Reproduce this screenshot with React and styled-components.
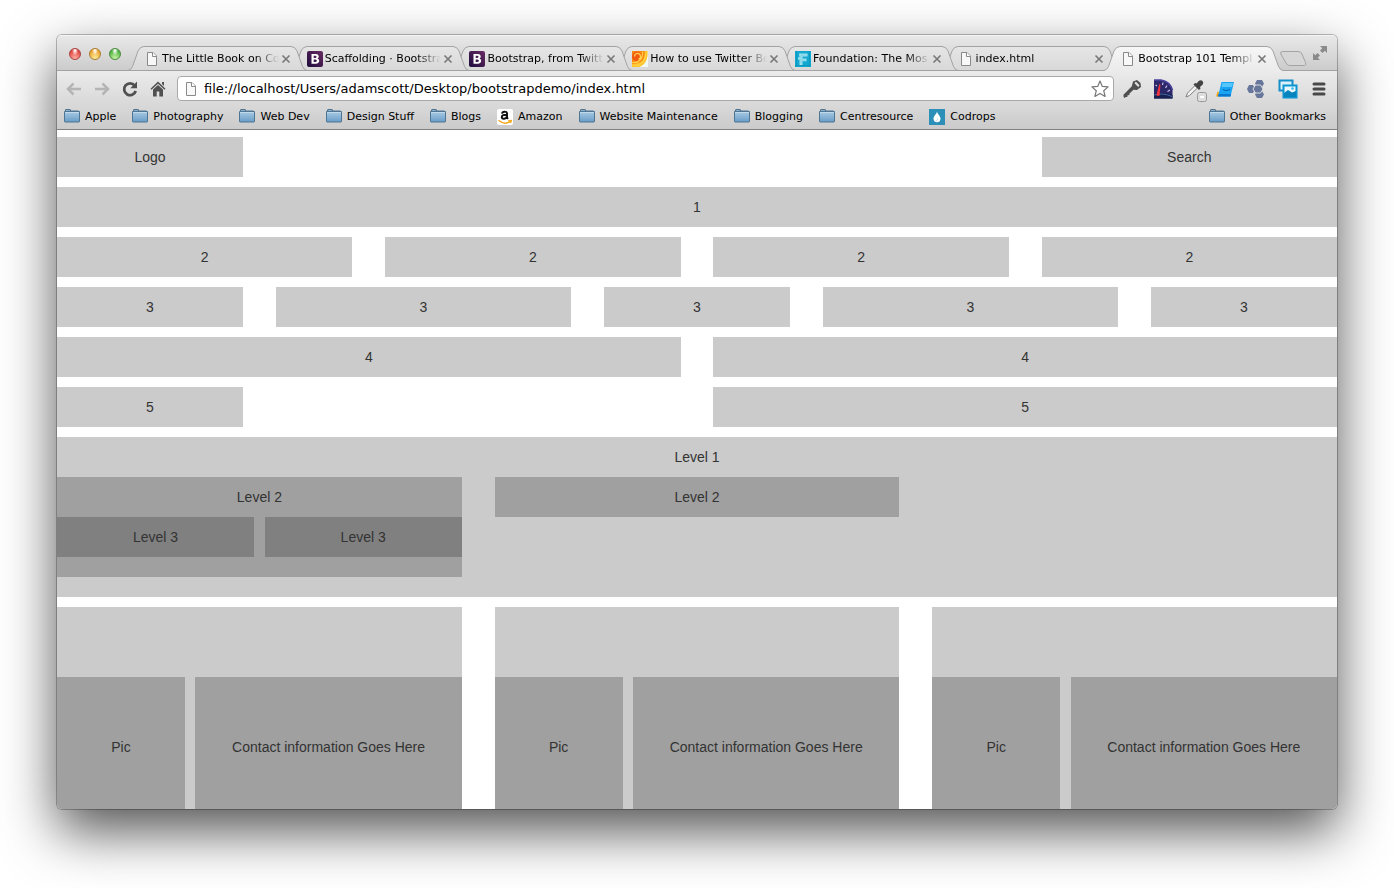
import React from "react";
import styled, { createGlobalStyle } from "styled-components";

const GlobalStyle = createGlobalStyle`
  *, *::before, *::after { box-sizing: border-box; }
  body { margin: 0; background: #fff; }
  button, input { font: inherit; color: inherit; }
  button { border: 0; padding: 0; background: none; display: flex; }
`;

const Desktop = styled.div`
  height: 100vh;
  padding: 35px 57px 79px;
  display: flex;
`;

const BrowserWindow = styled.div`
  flex: 1;
  min-width: 0;
  display: flex;
  flex-direction: column;
  border-radius: 5px;
  overflow: hidden;
  background: #fff;
  font-family: "DejaVu Sans", sans-serif;
  font-size: 11px;
  color: #000;
  box-shadow: 0 0 0 1px rgba(0, 0, 0, 0.25), 0 22px 54px rgba(0, 0, 0, 0.68);
`;

const TabStrip = styled.div`
  display: flex;
  height: 36px;
  padding: 11px 9px 0 12px;
  background: linear-gradient(#e9e9e9, #cbcbcb);
  box-shadow: inset 0 1px #f4f4f4, inset 0 -1px #a3a3a3;
`;

const TrafficLights = styled.div`
  display: flex;
  gap: 8px;
  padding-top: 2px;
  margin-right: 7px;
`;

const Light = styled.button`
  width: 12px;
  height: 12px;
  border-radius: 50%;
  border: 1px solid ${(p) => p.$edge};
  background: radial-gradient(ellipse at 50% 15%, rgba(255, 255, 255, 0.9) 8%, transparent 42%),
    radial-gradient(circle at 50% 95%, ${(p) => p.$glow}, ${(p) => p.$tint} 75%);
`;

const TabList = styled.nav`
  flex: 1;
  min-width: 0;
  display: flex;
  isolation: isolate;
`;

const TabBox = styled.div`
  flex: 1 1 0;
  min-width: 0;
  display: flex;
  height: 25px;
  margin-right: -16px;
  position: relative;
  z-index: ${(p) => p.$order};
`;

const TabBody = styled.div`
  flex: 1;
  min-width: 0;
  display: flex;
  align-items: center;
  padding-top: 1px;
  border-top: 1px solid #a3a3a3;
  border-bottom: 1px solid ${(p) => (p.$active ? "#ebebeb" : "#a3a3a3")};
  background: ${(p) => (p.$active ? "linear-gradient(#f6f6f6, #ebebeb)" : "linear-gradient(#e6e6e6, #d8d8d8)")};
`;

const TabEdgeSvg = styled.svg`
  flex: none;
  width: 16px;
  height: 25px;
  display: block;
`;

const TabTitle = styled.a`
  flex: 1;
  min-width: 0;
  margin-left: 2px;
  overflow: hidden;
  white-space: nowrap;
  line-height: 16px;
  color: #000;
  text-decoration: none;
  mask-image: linear-gradient(to right, #000 calc(100% - 24px), transparent);
`;

const CloseButton = styled.button`
  flex: none;
  margin-left: 2px;
`;

const NewTabButton = styled.button`
  margin: 4px 5px 0 12px;
  align-self: flex-start;
`;

const FullscreenButton = styled.button`
  align-self: flex-start;
`;

const Chrome = styled.div`
  display: flex;
  flex-direction: column;
  padding-bottom: 1px;
  background: linear-gradient(#ebebeb, #cbcbcb);
  border-bottom: 1px solid #808080;
`;

const Toolbar = styled.div`
  display: flex;
  align-items: center;
  height: 35px;
  padding: 0 9px 0 7px;
`;

const NavButtons = styled.div`
  display: flex;
  gap: 8px;
  margin-right: 9px;
`;

const AddressBar = styled.label`
  flex: 1;
  min-width: 0;
  display: flex;
  align-items: center;
  height: 25px;
  padding: 0 4px 0 5px;
  border: 1px solid #a9a9a9;
  border-radius: 4px;
  background: #fff;
`;

const AddressInput = styled.input`
  flex: 1;
  min-width: 0;
  margin: 0 0 0 5px;
  padding: 0;
  border: 0;
  outline: 0;
  background: none;
  font-size: 13px;
  line-height: 20px;
`;

const Extensions = styled.div`
  display: flex;
  gap: 11px;
  margin-left: 8px;
`;

const BookmarksBar = styled.nav`
  display: flex;
  gap: 16px;
  height: 22px;
  padding: 0 11px 0 7px;
`;

const Bookmark = styled.a`
  display: flex;
  align-items: center;
  gap: 5px;
  white-space: nowrap;
  line-height: 16px;
  color: #000;
  text-decoration: none;
  &:last-child { margin-left: auto; }
`;

const Glyph = styled.svg`
  flex: none;
  display: block;
  overflow: visible;
`;

const Viewport = styled.main`
  flex: 1;
  min-height: 0;
  overflow: auto;
  scrollbar-width: none;
  padding-top: 7px;
  font-family: "Liberation Sans", Arial, sans-serif;
  font-size: 14px;
  line-height: 40px;
  text-align: center;
  color: #333;
`;

const Row = styled.div`
  display: grid;
  grid-template-columns: repeat(12, minmax(0, 1fr));
  column-gap: 2.5641%;
  align-items: start;
  margin-bottom: ${(p) => p.$after ?? 0}px;
`;

const shades = ["#cbcbcb", "#a0a0a0", "#808080"];

const Cell = styled.div`
  grid-column: ${(p) => p.$start ?? "auto"} / span ${(p) => p.$span};
  min-height: 40px;
  background: ${(p) => shades[p.$level ?? 0]};
`;

const ContactCard = styled(Cell)`
  padding-top: 70px;
`;

const ContactCell = styled(Cell)`
  line-height: 140px;
`;

const PageIcon = () => (
  <Glyph width="16" height="16" viewBox="0 0 16 16">
    <path d="M3.5 1.5h5.500l3.500 3.500v9.500h-9z" fill="#f8f8f8" stroke="#8a8a8a" />
    <path d="M8.500 1.500v4h4" fill="#fff" stroke="#8a8a8a" />
  </Glyph>
);

const BootstrapIcon = () => (
  <Glyph width="16" height="16" viewBox="0 0 16 16">
    <defs>
      <linearGradient id="bs" x1="0" x2="1" y1="1" y2="0">
        <stop offset="0" stopColor="#1d0b3c" />
        <stop offset="1" stopColor="#6a2c63" />
      </linearGradient>
    </defs>
    <rect width="16" height="16" rx="2" fill="url(#bs)" />
    <path
      fillRule="evenodd"
      fill="#fff"
      d="M4.500 3h4.300c3.400 0 3.700 3.600 1.700 4.600 2.700 1 2.200 5.100-1.600 5.100H4.500zM6.700 4.800v2.100h1.700c1.600 0 1.500-2.100 0-2.100zM6.700 8.600v2.400h1.900c1.700 0 1.700-2.400 0-2.400z"
    />
  </Glyph>
);

const SwirlIcon = () => (
  <Glyph width="16" height="16" viewBox="0 0 16 16">
    <path d="M0 0h16v16H0z" fill="#eef8f8" />
    <path d="M0 0h15.500c1 7-2 14-8.500 16H0z" fill="#ffc62e" />
    <path d="M0 0h12.500c2 8-3 13-12.500 13z" fill="#f98a10" />
    <circle cx="5" cy="5.500" r="5" fill="#f25a14" />
    <path
      d="M2.500 5.500a3 3 0 1 1 4 2.800M0 11.500c7 1 11-4 10.500-11M2 14.500c7 0 11.500-5 11.500-12"
      fill="none"
      stroke="#ffd24a"
      strokeWidth="1.200"
    />
  </Glyph>
);

const FoundationIcon = () => (
  <Glyph width="16" height="16" viewBox="0 0 16 16">
    <path fill="#12a8cf" d="M0 0h16v16H0z" />
    <path stroke="#0a8fb8" d="M1.500 0v16M14.500 0v16M0 14.500h16" opacity=".6" />
    <path d="M4 2.500h8.500v3H7.500v2h4v2.800h-4v3.700H4.500V8.500H3v-2h1.500z" fill="#a5e3f1" />
    <path d="M6 4h5.500M6 4v8.500M7 9h3.500" stroke="#74d0e5" fill="none" />
  </Glyph>
);

const FolderIcon = () => (
  <Glyph width="16" height="16" viewBox="0 0 16 16">
    <defs>
      <linearGradient id="fold" x1="0" x2="0" y1="0" y2="1">
        <stop offset="0" stopColor="#a9cbe4" />
        <stop offset="1" stopColor="#689cc6" />
      </linearGradient>
    </defs>
    <path d="M1.500 3V1q0-.5.5-.5h4q.5 0 .5.500v1h8v1z" fill="#86aecb" stroke="#52738e" />
    <path d="M.5 2.500h15v10q0 .5-.5.500H1q-.500 0-.500-.500z" fill="url(#fold)" stroke="#4f7594" />
    <path d="M1 3.500h14" stroke="#c0d9eb" />
  </Glyph>
);

const AmazonIcon = () => (
  <Glyph width="16" height="16" viewBox="0 0 16 16">
    <rect width="16" height="16" rx="2" fill="#fff" />
    <path
      d="M5 4.600C5.300 2.300 10 1.700 10 4.500v4l1 1.300M10 5.700C7 5.500 4.600 6.300 4.800 8.300c.3 2.200 4.300 2 5.200-.8"
      fill="none"
      stroke="#111"
      strokeWidth="2"
    />
    <path d="M1.500 11.300c4 3.400 8.500 3.500 12 .9M11.300 11.600l3-.2-.8 2.600" fill="none" stroke="#f5a81c" strokeWidth="1.400" />
  </Glyph>
);

const DropIcon = () => (
  <Glyph width="16" height="16" viewBox="0 0 16 16">
    <path fill="#2c8fb8" d="M0 0h16v16H0z" />
    <path d="M8 2.500c.5 3 3.500 4.300 3.500 7a3.500 3.700 0 0 1-7 0c0-2.700 3-4 3.500-7z" fill="#fff" />
    <path d="M8.500 9.500a2 2 0 0 1-2 2.500" fill="none" stroke="#b9dbe8" />
  </Glyph>
);

const ArrowIcon = ({ flip }) => (
  <Glyph width="20" height="20" viewBox="0 0 20 20">
    <path
      d={flip ? "M3 10h12M10.500 4.500l5.500 5.500-5.500 5.500" : "M17 10H5M9.500 4.500L4 10l5.500 5.500"}
      fill="none"
      stroke="#b5b5b5"
      strokeWidth="2.500"
    />
  </Glyph>
);

const ReloadIcon = () => (
  <Glyph width="20" height="20" viewBox="0 0 20 20">
    <path d="M14.700 6.600A5.900 5.900 0 1 0 15.700 12" fill="none" stroke="#505050" strokeWidth="2.800" />
    <path d="M17 2.500v6.700h-6.700z" fill="#505050" />
  </Glyph>
);

const HomeIcon = () => (
  <Glyph width="20" height="20" viewBox="0 0 20 20">
    <path d="M10 2.500l7.500 7.300-1 1L10 4.700l-6.500 6.100-1-1z" fill="#505050" />
    <path d="M14 3h2v4l-2-2zM5 10.500l5-4.600 5 4.600v7h-3.700v-5H8.700v5H5z" fill="#505050" />
  </Glyph>
);

const StarIcon = () => (
  <Glyph width="18" height="18" viewBox="0 0 18 18">
    <path
      d="M9 1l2.300 5.400 5.800.5-4.400 3.800 1.400 5.700L9 13.400l-5.100 3 1.400-5.700L.9 6.900l5.800-.5z"
      fill="#fff"
      stroke="#777"
      strokeWidth="1.200"
      strokeLinejoin="round"
    />
  </Glyph>
);

const KeyIcon = () => (
  <Glyph width="20" height="20" viewBox="0 0 20 20">
    <path
      d="M11 2.500l4-1.500 3.500 3 .5 4-4 3-3.500-.3-4.200 4 .3 1.200-2 .3-.3 1.800H3.800L2.500 19l-1-1.200v-2l8.300-8.600z"
      fill="#505050"
    />
    <path d="M13.800 4l2.400 2.600" stroke="#dedede" strokeWidth="2.200" strokeLinecap="round" />
  </Glyph>
);

const GaugeIcon = () => (
  <Glyph width="20" height="20" viewBox="0 0 20 20">
    <path d="M1 1h7q9 1.500 11.500 10v8.500H1z" fill="#2c2768" />
    <path d="M1 1h7q9 1.500 11.500 10" fill="none" stroke="#4a43a0" strokeWidth="1.500" />
    <path d="M1 19.500V15q9-2.500 18.500 1v3.500z" fill="#17204f" />
    <path d="M1 16q9-2.500 18 1.500" fill="none" stroke="#4468a8" />
    <path d="M2.500 6l1.500 1M10 3.500l-.5 2.500M14 6.500L12.500 9M17 11l-2.500 1.500" stroke="#c8c2ee" strokeWidth="1.200" />
    <path d="M6.500 4.500l1 1.500-.8 8q.8 3-1.700 3T4 14z" fill="#f5323a" />
  </Glyph>
);

const DropperIcon = () => (
  <Glyph width="20" height="20" viewBox="0 0 20 20">
    <path d="M11 6.500L3.500 14 2 18l3.500-1.500L13.500 9z" fill="#f2f2f2" stroke="#808080" />
    <path d="M9.500 5.500L11 4l1.500.5L15 1.800q2-1.300 3.500.2t.2 3.500L16 8l.5 1.500L15 11z" fill="#444" />
    <rect x="13.500" y="13.500" width="9" height="9" rx="2" fill="#ddd" stroke="#999" />
    <rect x="16" y="17" width="4" height="2" fill="#fff" />
  </Glyph>
);

const NoteIcon = () => (
  <Glyph width="20" height="20" viewBox="0 0 20 20">
    <path d="M1 17.500l1.500-5 2.500 1 1 4z" fill="#f4a51d" />
    <path d="M6.500 3H19l-3.500 14.500H3z" fill="#18a4f2" />
    <path d="M7.500 4h10.500l-1 4H6.500z" fill="#57c6fb" />
    <path d="M3.500 15h12.500l-.5 2.500H3z" fill="#0b78cf" />
    <path d="M8 10.500l3 1.200 4-1.200" stroke="#0a5fae" fill="none" />
  </Glyph>
);

const HexIcon = () => (
  <Glyph width="20" height="20" viewBox="0 0 20 20">
    <g fill="#67779b">
      <path d="M3 6h4l2 4-2 4H3l-2-4z" />
      <path d="M11 1h5l2 3.500L16 8h-5L9 4.500z" />
      <path d="M11 12h5l2 3.500-2 3.500h-5l-2-3.500z" />
    </g>
    <path d="M9.500 6h5l2.500 4-2.500 4h-5L7 10z" fill="#67779b" stroke="#dcdcdc" />
  </Glyph>
);

const PicturesIcon = () => (
  <Glyph width="20" height="20" viewBox="0 0 20 20">
    <path d="M2.500 1.500h13v10h-13z" fill="#d9f0fa" stroke="#168fc9" strokeWidth="2" />
    <path d="M6.500 6.500h13v12h-13z" fill="#e9f8fe" stroke="#0b95d2" strokeWidth="2" />
    <path d="M7 14l4-3 4 2.500 4-1.500v6H7z" fill="#0784be" />
    <circle cx="15.500" cy="9.500" r="1.300" fill="#39b8ea" />
  </Glyph>
);

const MenuIcon = () => (
  <Glyph width="20" height="20" viewBox="0 0 20 20">
    <path d="M6 5h10M6 10h10M6 15h10" stroke="#484848" strokeWidth="3" strokeLinecap="round" />
  </Glyph>
);

const CloseIcon = () => (
  <Glyph width="10" height="10" viewBox="0 0 10 10">
    <path d="M1.500 1.500l7 7M8.500 1.500l-7 7" stroke="#777" strokeWidth="1.600" />
  </Glyph>
);

const NewTabIcon = () => (
  <Glyph width="28" height="17" viewBox="0 0 28 17">
    <path
      d="M3.500 1.500h16q2.500 0 3.500 2.500l3.500 8.500q1 3-1 3h-15q-2.500 0-3.500-2.500L1.800 4Q1 1.500 3.500 1.500z"
      fill="#d6d6d6"
      stroke="#a3a3a3"
    />
  </Glyph>
);

const FullscreenIcon = () => (
  <Glyph width="16" height="14" viewBox="0 0 16 14">
    <path d="M8 0h7v7l-2.200-2.200L10.500 7 8 4.500l2.300-2.200zM1 7l2.200 2.200L5.500 7 8 9.500l-2.300 2.200L8 14H1z" fill="#8a8a8a" />
  </Glyph>
);

const TabEdge = ({ side, active }) => {
  const id = `${side}${active ? "Active" : "Idle"}`;
  return (
    <TabEdgeSvg viewBox="0 0 16 25">
      <defs>
        <linearGradient id={id} x1="0" x2="0" y1="0" y2="25" gradientUnits="userSpaceOnUse">
          <stop offset="0" stopColor={active ? "#f6f6f6" : "#e6e6e6"} />
          <stop offset="1" stopColor={active ? "#ebebeb" : "#d8d8d8"} />
        </linearGradient>
      </defs>
      <g transform={side === "right" ? "matrix(-1 0 0 1 16 0)" : undefined}>
        <path d="M0 24.500Q3 24 4.500 20.500L10 5Q12 .5 16 .5V25H0z" fill={`url(#${id})`} />
        <path d="M0 24.500Q3 24 4.500 20.500L10 5Q12 .5 16 .5" fill="none" stroke="#a3a3a3" />
        {!active && <path d="M0 24.500h16" stroke="#a3a3a3" />}
      </g>
    </TabEdgeSvg>
  );
};

const tabs = [
  { title: "The Little Book on Co", Icon: PageIcon },
  { title: "Scaffolding · Bootstra", Icon: BootstrapIcon },
  { title: "Bootstrap, from Twitt", Icon: BootstrapIcon },
  { title: "How to use Twitter Bo", Icon: SwirlIcon },
  { title: "Foundation: The Mos", Icon: FoundationIcon },
  { title: "index.html", Icon: PageIcon },
  { title: "Bootstrap 101 Templ", Icon: PageIcon, active: true },
];

const bookmarks = [
  ["Apple", FolderIcon],
  ["Photography", FolderIcon],
  ["Web Dev", FolderIcon],
  ["Design Stuff", FolderIcon],
  ["Blogs", FolderIcon],
  ["Amazon", AmazonIcon],
  ["Website Maintenance", FolderIcon],
  ["Blogging", FolderIcon],
  ["Centresource", FolderIcon],
  ["Codrops", DropIcon],
  ["Other Bookmarks", FolderIcon],
];

const extensions = [
  ["Passwords", KeyIcon],
  ["Page speed", GaugeIcon],
  ["Color picker", DropperIcon],
  ["Notes", NoteIcon],
  ["Modules", HexIcon],
  ["Pictures", PicturesIcon],
  ["Menu", MenuIcon],
];

const rows = [
  [{ span: 2, text: "Logo" }, { span: 3, start: 10, text: "Search" }],
  [{ span: 12, text: "1" }],
  [3, 3, 3, 3].map((span) => ({ span, text: "2" })),
  [2, 3, 2, 3, 2].map((span) => ({ span, text: "3" })),
  [6, 6].map((span) => ({ span, text: "4" })),
  [{ span: 2, text: "5" }, { span: 6, start: 7, text: "5" }],
];

export default function App() {
  return (
    <Desktop>
      <GlobalStyle />
      <BrowserWindow>
        <TabStrip>
          <TrafficLights>
            <Light aria-label="Close" $edge="#a8433f" $tint="#e0443e" $glow="#ffb0a4" />
            <Light aria-label="Minimize" $edge="#a97a2c" $tint="#e9a22b" $glow="#fff0a0" />
            <Light aria-label="Zoom" $edge="#4a8a3c" $tint="#4db23f" $glow="#cdf7a8" />
          </TrafficLights>
          <TabList aria-label="Tabs">
            {tabs.map(({ title, Icon, active }, i) => (
              <TabBox key={title} $order={active ? 10 : 9 - i}>
                <TabEdge side="left" active={active} />
                <TabBody $active={active}>
                  <Icon />
                  <TabTitle href="#">{title}</TabTitle>
                  <CloseButton aria-label="Close tab"><CloseIcon /></CloseButton>
                </TabBody>
                <TabEdge side="right" active={active} />
              </TabBox>
            ))}
          </TabList>
          <NewTabButton aria-label="New tab"><NewTabIcon /></NewTabButton>
          <FullscreenButton aria-label="Full screen"><FullscreenIcon /></FullscreenButton>
        </TabStrip>
        <Chrome>
          <Toolbar>
            <NavButtons>
              <button aria-label="Back"><ArrowIcon /></button>
              <button aria-label="Forward"><ArrowIcon flip /></button>
              <button aria-label="Reload"><ReloadIcon /></button>
              <button aria-label="Home"><HomeIcon /></button>
            </NavButtons>
            <AddressBar>
              <PageIcon />
              <AddressInput
                aria-label="Address"
                defaultValue="file://localhost/Users/adamscott/Desktop/bootstrapdemo/index.html"
              />
              <button aria-label="Bookmark this page"><StarIcon /></button>
            </AddressBar>
            <Extensions>
              {extensions.map(([name, Icon]) => (
                <button key={name} aria-label={name}><Icon /></button>
              ))}
            </Extensions>
          </Toolbar>
          <BookmarksBar aria-label="Bookmarks">
            {bookmarks.map(([name, Icon]) => (
              <Bookmark key={name} href="#"><Icon />{name}</Bookmark>
            ))}
          </BookmarksBar>
        </Chrome>
        <Viewport>
          {rows.map((cells, r) => (
            <Row key={r} $after={10}>
              {cells.map((cell, c) => (
                <Cell key={c} $span={cell.span} $start={cell.start}>{cell.text}</Cell>
              ))}
            </Row>
          ))}
          <Row $after={10}>
            <Cell $span={12}>
              Level 1
              <Row $after={20}>
                <Cell $span={4} $level={1}>
                  Level 2
                  <Row $after={20}>
                    <Cell $span={6} $level={2}>Level 3</Cell>
                    <Cell $span={6} $level={2}>Level 3</Cell>
                  </Row>
                </Cell>
                <Cell $span={4} $level={1}>Level 2</Cell>
              </Row>
            </Cell>
          </Row>
          <Row>
            {[1, 2, 3].map((n) => (
              <ContactCard key={n} $span={4}>
                <Row>
                  <ContactCell $span={4} $level={1}>Pic</ContactCell>
                  <ContactCell $span={8} $level={1}>Contact information Goes Here</ContactCell>
                </Row>
              </ContactCard>
            ))}
          </Row>
        </Viewport>
      </BrowserWindow>
    </Desktop>
  );
}
